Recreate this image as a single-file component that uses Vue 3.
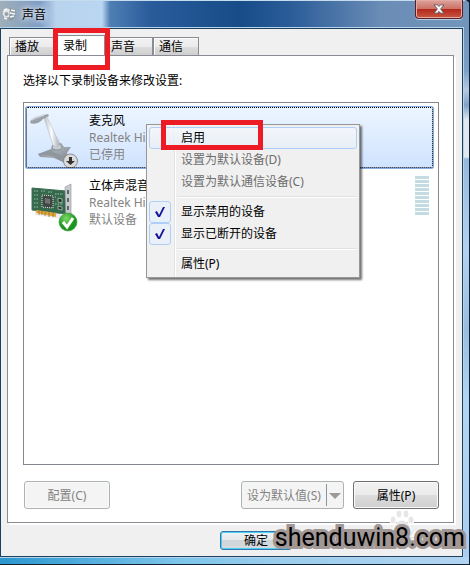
<template>
    <main class="window">
        <header class="titlebar">
            <svg class="app-icon" viewBox="0 0 16 16" aria-hidden="true">
                <ellipse cx="7" cy="8" rx="6" ry="6.500" fill="#9aa6ae" />
                <circle cx="6" cy="7" r="4.500" fill="#dfe5e8" />
                <circle cx="5.500" cy="8" r="2" fill="#98a4ac" />
                <path d="M9 2l6 2-1 7-4 4-2-2z" fill="#8b979f" />
                <path d="M10 4l4 1M9 7l5 1M9 11l4-1M3 4l3-1M3 12l3 1" stroke="#f8fafb" stroke-width="1.5" />
            </svg>
            <h1>声音</h1>
            <button class="close" type="button" aria-label="关闭">
                <svg viewBox="0 0 14 12" aria-hidden="true">
                    <path d="M1 1h4l2 2 2-2h4L9 6l4 5H9L7 9l-2 2H1l4-5z" fill="#f6f6f6" stroke="#565060" />
                </svg>
            </button>
        </header>

        <div class="client">
            <nav class="tabs" role="tablist">
                <button v-for="tab in tabs" :key="tab" type="button" role="tab" class="tab"
                    :class="{ selected: tab === activeTab }" :aria-selected="tab === activeTab"
                    @click="activeTab = tab">{{ tab }}</button>
                <span class="mark mark-tab"></span>
            </nav>

            <section class="panel">
                <p class="hint">选择以下录制设备来修改设置:</p>
                <div class="list">
                    <ul>
                        <!-- Microphone -->
                        <li class="device selected">
                            <svg class="device-icon" viewBox="0 0 54 60" aria-hidden="true">
                                <defs>
                                    <linearGradient id="arm">
                                        <stop offset="0" stop-color="#b5bbc2" />
                                        <stop offset="0.5" stop-color="#fafbfc" />
                                        <stop offset="1" stop-color="#a3abb3" />
                                    </linearGradient>
                                    <linearGradient id="base" x2="1" y2="1">
                                        <stop offset="0" stop-color="#70777f" />
                                        <stop offset="0.5" stop-color="#a2a9b0" />
                                        <stop offset="1" stop-color="#798088" />
                                    </linearGradient>
                                </defs>
                                <path d="M13 46l13-5 2-5 8-1 3 4 7 0-4 6 2 10-6-1-9-4-14-1z" fill="url(#base)" />
                                <path d="M13 46l15 2 12 7 4 0-1-5-8-3-9-4z" fill="#8e969e" />
                                <ellipse cx="32" cy="39" rx="5" ry="3" fill="#c8cdd2" stroke="#8b939b" />
                                <path d="M18 7l3 0 14 29c-1 3-6 3-7 1z" fill="url(#arm)" stroke="#b0b7be" stroke-width="0.5" />
                                <path d="M5 15c1-5 7-7 11-7l7-2 1 2-6 3c-3 4-9 6-13 4z" fill="#9aa1a8" />
                                <path d="M7 12c3-3 8-3 12-5" fill="none" stroke="#ced4d9" stroke-width="1.5" />
                                <circle cx="45.500" cy="53" r="7" fill="#dadada" stroke="#8b8b8b" />
                                <path d="M44 49h3v4h3l-4.500 4-4.500-4h3z" fill="#333" />
                            </svg>
                            <div class="device-text">
                                <strong>麦克风</strong>
                                <span>Realtek High Definition Audio</span>
                                <span>已停用</span>
                            </div>
                        </li>
                        <!-- Stereo mix -->
                        <li class="device">
                            <svg class="device-icon" viewBox="0 0 54 60" aria-hidden="true">
                                <defs>
                                    <radialGradient id="ok" cx="0.4" cy="0.3">
                                        <stop offset="0" stop-color="#7fdc68" />
                                        <stop offset="1" stop-color="#1c9420" />
                                    </radialGradient>
                                </defs>
                                <path d="M10 42l26 4v-7l-26-3z" fill="#ececec" />
                                <path d="M7 15l34 3v23L7 37z" fill="#35684c" stroke="#3d7055" />
                                <path d="M11 37l20 3v4l-20-4z" fill="#e0a73a" />
                                <path d="M14 38v4M17 38v4M20 39v4M24 39v5M28 40v4" stroke="#8d641c" stroke-width="0.7" />
                                <path d="M17 22l11 1v12l-11-1z" fill="#3f4744" stroke="#e4ece6" stroke-dasharray="1 1" />
                                <path d="M20 25l5 1v5l-5-1z" fill="#6d7471" />
                                <path d="M33 25l4 1v4l-4-1zM33 33l4 1v3l-4-1z" fill="#26332c" stroke="#c2d6c9" stroke-width="0.7" />
                                <path d="M9 18h5M16 18h5M23 19h5M9 22h5M9 26h5M9 30h5M9 34h5M30 21h8M30 24h1M30 31h8"
                                    stroke="#9cc4aa" stroke-width="1.2" stroke-dasharray="1.500 1" />
                                <path d="M40 14l6-3v38l-5 2z" fill="#c6cacd" stroke="#8b9297" stroke-width="0.6" />
                                <path d="M43 17v4M43 25v4M43 33v4" stroke="#5d6569" stroke-width="2" />
                                <circle cx="43" cy="49" r="9" fill="url(#ok)" stroke="#3b9a3b" stroke-width="0.6" />
                                <path d="M38 49l4 5 6-9" fill="none" stroke="#fff" stroke-width="3" />
                            </svg>
                            <div class="device-text">
                                <strong>立体声混音</strong>
                                <span>Realtek High Definition Audio</span>
                                <span>默认设备</span>
                            </div>
                            <div class="meter" aria-hidden="true">
                                <i v-for="n in 10" :key="n"></i>
                            </div>
                        </li>
                    </ul>

                    <!-- Context menu -->
                    <div class="menu" role="menu">
                        <template v-for="(item, i) in menuItems" :key="i">
                            <hr v-if="item.separator" />
                            <button v-else type="button" class="menu-item" :disabled="item.disabled"
                                :role="item.toggle ? 'menuitemcheckbox' : 'menuitem'"
                                :aria-checked="item.toggle ? item.checked : undefined"
                                :class="{ hot: item.hot }" @click="toggle(item)">
                                <span class="check" :class="{ on: item.checked }">
                                    <svg v-if="item.checked" viewBox="0 0 10 12" aria-hidden="true">
                                        <path d="M0 6l2-1 2 4L8 1h2L5 11H3z" fill="#14149b" />
                                    </svg>
                                </span>
                                <span class="menu-label">{{ item.label }}</span>
                            </button>
                        </template>
                        <span class="mark mark-menu"></span>
                    </div>
                </div>

                <div class="actions">
                    <button class="btn configure" type="button" disabled>配置(C)</button>
                    <div class="split">
                        <button type="button" disabled>设为默认值(S)</button>
                        <button class="arrow" type="button" disabled aria-label="更多">
                            <svg viewBox="0 0 12 6" aria-hidden="true">
                                <path d="M0 0h12L6 6z" fill="#9a9a9a" />
                            </svg>
                        </button>
                    </div>
                    <button class="btn" type="button">属性(P)</button>
                </div>
            </section>

            <footer class="footer">
                <button class="ok" type="button">确定</button>
                <div class="stamp" aria-hidden="true">
                    <svg viewBox="0 0 26 24">
                        <g fill="#e6e6e6" stroke="#fff">
                            <ellipse cx="4" cy="10" rx="3" ry="4" />
                            <ellipse cx="10" cy="4" rx="3" ry="4" />
                            <ellipse cx="17" cy="4" rx="3" ry="4" />
                            <ellipse cx="22" cy="10" rx="3" ry="4" />
                            <path d="M13 10c4 0 9 6 9 10s-4 4-9 3c-5 1-9 1-9-3s5-10 9-10z" />
                        </g>
                    </svg>
                    <span>Bai</span><span>经验</span>
                </div>
                <div class="site">shenduwin8.com</div>
            </footer>
        </div>
    </main>
</template>

<script setup>
import { ref } from 'vue';

const tabs = ['播放', '录制', '声音', '通信'];
const activeTab = ref('录制');

const menuItems = ref([
    { label: '启用', hot: true },
    { label: '设置为默认设备(D)', disabled: true },
    { label: '设置为默认通信设备(C)', disabled: true },
    { separator: true },
    { label: '显示禁用的设备', toggle: true, checked: true },
    { label: '显示已断开的设备', toggle: true, checked: true },
    { separator: true },
    { label: '属性(P)' },
]);

const toggle = (item) => {
    if (item.toggle) {
        item.checked = !item.checked;
    }
};
</script>

<style>
body {
    margin: 0;
    background: #10202e;
}
</style>

<style scoped>
* {
    box-sizing: border-box;
}

.window {
    display: flex;
    flex-direction: column;
    min-height: 100vh;
    padding: 0 7px 8px 0;
    font: 12px/17px "Noto Sans", "Noto Sans CJK SC", sans-serif;
    color: #000;
    border-top-right-radius: 6px;
    background:
        linear-gradient(#c4dcee, #c4dcee) top / 100% 1px no-repeat,
        linear-gradient(#10202e, #10202e) bottom / 100% 1px no-repeat,
        linear-gradient(#10202e, #10202e) right / 1px 100% no-repeat,
        linear-gradient(90deg, #2a97cf, #7cc5ea 38%, #9bcdec 60%, #b2d4f2) bottom / 100% 8px no-repeat,
        linear-gradient(#7094ba 28px, #7a9fc8 70px, #b4cbe2 90px, #7fa2c8 105px, #e0e8f2 120px, #dfe8f3 157px, #97b8de 159px, #b2d2f4 250px, #9abce0 330px, #b2d4f6 400px, #a9cdf2) right / 8px 100% no-repeat,
        linear-gradient(90deg, #a0afb8, #7d9cc4 40px, #b9d3ed 56px, #b9d6f2 102px, #4f7eb4 110px, #2a5c9b 150px, #174c88 240px, #2a5c98 290px, #6a8cb5 380px, #7396bc);
}

.titlebar {
    display: flex;
    align-items: center;
    height: 28px;
    padding-left: 1px;
}

.app-icon {
    width: 16px;
    height: 16px;
    margin-right: 5px;
}

h1 {
    flex: 1;
    margin: 0;
    font-size: 12px;
    font-weight: 400;
    text-shadow: 0 0 5px #fff, 0 0 8px #fff;
}

button {
    margin: 0;
    padding: 0;
    font: inherit;
    color: inherit;
}

.close {
    display: flex;
    align-items: center;
    justify-content: center;
    align-self: flex-start;
    width: 48px;
    height: 19px;
    border: 1px solid #56202b;
    border-top: 0;
    border-radius: 0 0 4px 4px;
    background: linear-gradient(#dba49e, #cd7165 48%, #b3271b 50%, #c8573f);
    box-shadow: inset 0 0 0 1px #e6aaa2, 0 1px 0 #b9cde2;
}

.close svg {
    width: 12px;
    height: 10px;
}

.client {
    display: flex;
    flex: 1;
    flex-direction: column;
    padding: 6px 8px 0 6px;
    border: 1px solid #1d4161;
    background: #f0f0f0;
    box-shadow: 0 0 0 1px #b6d3ec;
}

/* Tabs */
.tabs {
    position: relative;
    display: flex;
    align-items: flex-end;
    height: 20px;
    padding-left: 2px;
}

.tab {
    width: 48px;
    height: 18px;
    padding: 0 0 0 5px;
    border: 1px solid #898c95;
    border-bottom: 0;
    background: linear-gradient(#f2f2f2, #ebebeb 50%, #dddddd 51%, #cfcfcf);
    line-height: 17px;
    text-align: left;
    box-shadow: inset 1px 1px #fbfbfb;
}

.tab:last-of-type {
    width: 46px;
}

.tab.selected {
    height: 20px;
    background: #fff;
}

.mark {
    position: absolute;
    z-index: 3;
    border: 5px solid #ed1c24;
    pointer-events: none;
}

.mark-tab {
    top: -7px;
    left: 46px;
    width: 57px;
    height: 42px;
}

.panel {
    display: flex;
    flex: 1;
    flex-direction: column;
    padding: 16px 14px 13px 15px;
    border: 1px solid #898c95;
    background: #fff;
    box-shadow: 2px 2px #fff;
}

.hint {
    margin: 0 0 13px;
}

.list {
    position: relative;
    flex: 1;
    padding: 3px 4px 0 1px;
    border: 1px solid #828790;
}

ul {
    display: grid;
    gap: 2px;
    margin: 0;
    padding: 0;
    list-style: none;
}

.device {
    display: flex;
    align-items: center;
    height: 63px;
    padding-right: 5px;
    border-radius: 3px;
}

.device.selected {
    outline: 1px dotted #000;
    outline-offset: -2px;
    background: linear-gradient(#edf5ff, #cfe3ff);
    box-shadow: inset 0 0 0 1px #84acdd;
}

.device-icon {
    width: 54px;
    height: 60px;
    margin-right: 10px;
}

.device-text {
    display: flex;
    flex: 1;
    flex-direction: column;
    color: #838383;
    white-space: nowrap;
}

.device-text strong {
    font-weight: 400;
    color: #000;
}

.meter {
    display: grid;
    gap: 1px;
    align-self: flex-start;
    width: 14px;
    margin-top: 5px;
}

.meter i {
    height: 3px;
    background: #c3dce2;
}

/* Menu */
.menu {
    position: absolute;
    top: 21px;
    left: 122px;
    width: 214px;
    padding: 2px;
    border: 1px solid #979797;
    background: linear-gradient(90deg, #f1f1f1 27px, #e2e3e3 27px, #e2e3e3 28px, #fff 28px, #fff 29px, #f0f0f0 29px);
    box-shadow: 2px 2px 2px rgba(0, 0, 0, 0.55);
}

.menu-item {
    display: flex;
    align-items: center;
    width: 100%;
    height: 22px;
    border: 1px solid transparent;
    border-radius: 3px;
    background: none;
    text-align: left;
}

.menu-item.hot {
    border-color: #aecff7;
    background: linear-gradient(rgba(243, 246, 251, 0.8), rgba(230, 238, 248, 0.8));
}

.menu-item:disabled {
    color: #6d6d6d;
}

.menu-label {
    padding-bottom: 2px;
}

.check {
    display: flex;
    align-items: center;
    justify-content: center;
    width: 22px;
    height: 22px;
    margin: 0 10px 0 -1px;
    border: 1px solid transparent;
    border-radius: 3px;
}

.check.on {
    border-color: #aecff7;
    background: #e9f0f8;
}

.check svg {
    width: 10px;
    height: 12px;
}

.menu hr {
    height: 2px;
    margin: 3px 0 3px 28px;
    border: 0;
    border-top: 1px solid #e0e0e0;
    background: #fff;
}

.mark-menu {
    top: -5px;
    left: 14px;
    width: 102px;
    height: 30px;
}

/* Buttons */
.actions {
    display: flex;
    gap: 9px;
    margin-top: 16px;
    padding-left: 1px;
}

.btn {
    width: 86px;
    height: 28px;
    border: 1px solid #707070;
    border-radius: 3px;
    background: linear-gradient(#f2f2f2, #ebebeb 48%, #dddddd 50%, #cfcfcf);
    box-shadow: inset 0 0 0 1px #fafafa;
}

.btn:disabled {
    border-color: #adb2b5;
    background: #f4f4f4;
    color: #838383;
}

.configure {
    margin-right: auto;
}

.split {
    display: flex;
    width: 103px;
    height: 28px;
    border: 1px solid #adb2b5;
    border-radius: 3px;
    background: #f4f4f4;
    color: #838383;
}

.split button {
    flex: 1;
    border: 0;
    background: none;
    white-space: nowrap;
}

.split .arrow {
    flex: 0 0 17px;
    margin: 2px 0;
    border-left: 1px solid #8f9396;
}

.arrow svg {
    width: 12px;
    height: 6px;
    vertical-align: middle;
}

.footer {
    position: relative;
    height: 33px;
    padding: 8px 0 0 213px;
}

.ok {
    display: block;
    width: 72px;
    height: 19px;
    border: 1px solid #3079ad;
    border-radius: 3px;
    background: linear-gradient(#f0f3f4, #e4e8ea 48%, #cfd6d9 50%, #d5dbde);
    box-shadow: inset 0 0 0 1px #4fcdf2;
    line-height: 17px;
}

/* Watermarks */
.stamp {
    position: absolute;
    right: 13px;
    bottom: 8px;
    display: flex;
    align-items: flex-end;
    gap: 27px;
    color: #fff;
    font-weight: 700;
    font-size: 15px;
    line-height: 22px;
    text-shadow: 0 0 2px #ccc;
}

.stamp svg {
    position: absolute;
    bottom: 14px;
    left: 28px;
    width: 26px;
    height: 24px;
}

.site {
    position: absolute;
    right: -11px;
    bottom: 0;
    font: 25px/36px Roboto, sans-serif;
    color: #000;
    -webkit-text-stroke: 6px #a19795;
    paint-order: stroke fill;
}
</style>
